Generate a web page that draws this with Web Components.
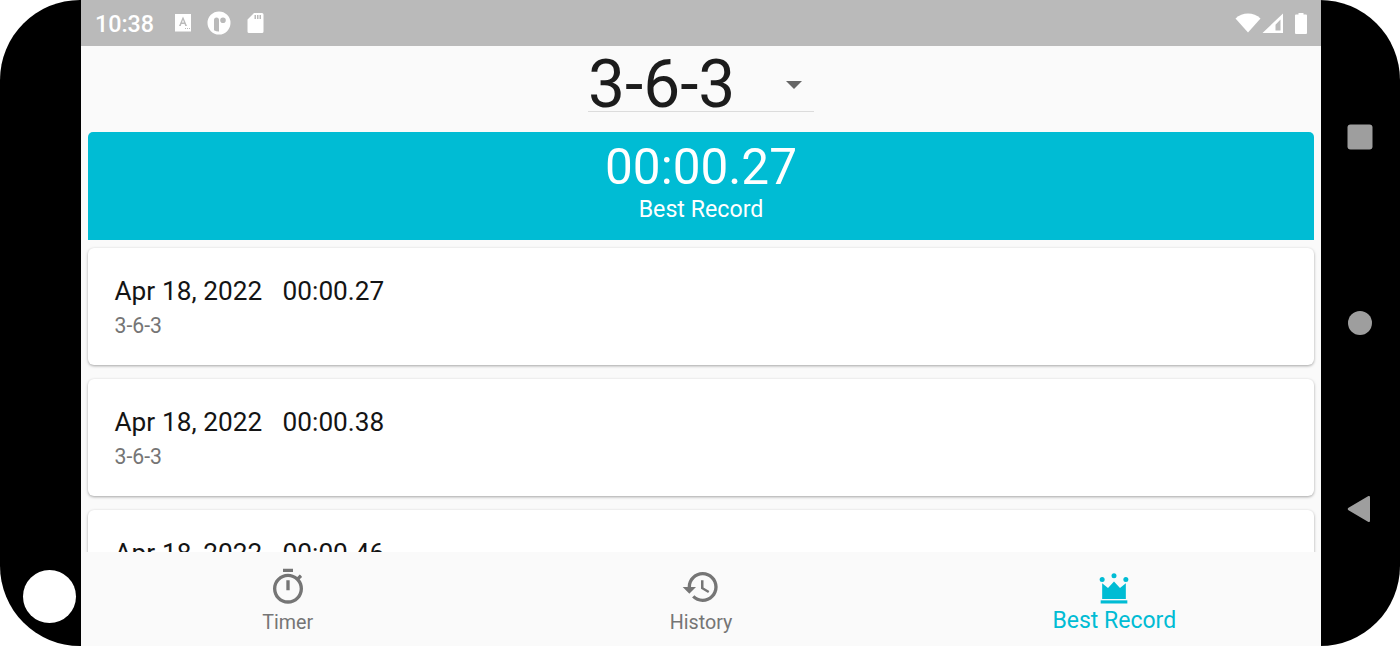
<!DOCTYPE html>
<html>
<head>
<meta charset="utf-8">
<style>
  html, body { margin: 0; height: 100%; background: #fff; font-family: Roboto, sans-serif; }
</style>
</head>
<body>
<app-device>
  <status-bar slot="status" time="10:38"></status-bar>
  <record-spinner slot="main" value="3-6-3"></record-spinner>
  <best-banner slot="main" time="00:00.27">Best Record</best-banner>
  <record-card slot="main" date="Apr 18, 2022" time="00:00.27" name="3-6-3"></record-card>
  <record-card slot="main" date="Apr 18, 2022" time="00:00.38" name="3-6-3"></record-card>
  <record-card slot="main" date="Apr 18, 2022" time="00:00.46" name="3-6-3"></record-card>
  <bottom-nav slot="nav">
    <nav-item icon="timer">Timer</nav-item>
    <nav-item icon="history">History</nav-item>
    <nav-item icon="crown" active>Best Record</nav-item>
  </bottom-nav>
</app-device>

<script>
// the phone frame: black body with left bezel, screen, right soft keys
class AppDevice extends HTMLElement {
  constructor() {
    super();
    this.attachShadow({ mode: "open" });
    this.shadowRoot.innerHTML = `
    <style>
      :host { display: flex; width: 1400px; height: 646px; background: #000; border-radius: 80px; overflow: hidden; }
      .left { width: 81px; flex: none; display: flex; flex-direction: column; justify-content: flex-end; align-items: center; padding: 0 0 23px 18px; box-sizing: border-box; }
      .cam { width: 53px; height: 53px; border-radius: 50%; background: #fff; }
      .screen { width: 1240px; flex: none; display: flex; flex-direction: column; background: #fafafa; }
      .main { flex: 1; min-height: 0; overflow: hidden; display: flex; flex-direction: column; }
      .right { flex: 1; display: flex; flex-direction: column; align-items: center; padding: 124px 1px 0 0; box-sizing: border-box; }
      .key { display: block; fill: #9e9e9e; }
      .k2 { margin-top: 161px; }
      .k3 { margin-top: 160px; }
    </style>
    <div class="left"><div class="cam"></div></div>
    <div class="screen">
      <slot name="status"></slot>
      <div class="main"><slot name="main"></slot></div>
      <slot name="nav"></slot>
    </div>
    <div class="right">
      <svg class="key" width="26" height="26" viewBox="0 0 26 26"><rect x="0.5" y="0.5" width="25" height="25" rx="3"/></svg>
      <svg class="key k2" width="26" height="24" viewBox="0 0 26 24"><circle cx="13" cy="12" r="12"/></svg>
      <svg class="key k3" width="26" height="28" viewBox="0 0 26 28" style="transform:translateX(-1px)"><path d="M22 1.2c1-.7 2-.2 2 1v23.600c0 1.200-1 1.700-2 1L2.500 15.200c-1-.6-1-1.800 0-2.400z"/></svg>
    </div>`;
  }
}

class StatusBar extends HTMLElement {
  constructor() {
    super();
    this.attachShadow({ mode: "open" });
    this.shadowRoot.innerHTML = `
    <style>
      :host { display: flex; align-items: center; height: 46px; background: #bababa; color: #fff; padding: 0 13px 0 14px; box-sizing: border-box; }
      .time { font: 500 23.300px/42px Roboto, sans-serif; width: 79px; padding-top: 2px; }
      svg { display: block; fill: #fff; flex: none; }
      .sp { flex: 1; }
    </style>
    <span class="time">${this.getAttribute("time")}</span>
    <svg width="18" height="20" viewBox="0 0 18 20"><path fill-rule="evenodd" d="M1 1h16v17.500H1zM9 3.500L5 13h1.700l.7-1.900h3.200l.7 1.900H13L9 3.500zm0 3.300l1 2.800H8zM11 15h1v1h-1zm2 0h1v1h-1zm2 0h1v1h-1z"/></svg>
    <svg width="24" height="24" viewBox="0 0 24 24" style="margin-left:15px"><path fill-rule="evenodd" d="M12 .5a11.500 11.500 0 1 1 0 23 11.500 11.500 0 0 1 0-23zM9.500 6.500a2.500 2.500 0 0 0-2.500 2.500v10.200a9 9 0 0 0 5 1.300V9a2.500 2.500 0 0 0-2.500-2.500zM16 6.500a2.800 2.800 0 1 0 0 5.600 2.800 2.800 0 0 0 0-5.600z"/></svg>
    <svg width="18" height="20" viewBox="0 0 18 20" style="margin-left:15px"><path fill-rule="evenodd" d="M8 0h8a1.500 1.500 0 0 1 1.500 1.500v17A1.500 1.500 0 0 1 16 20H3a1.500 1.500 0 0 1-1.500-1.500V6.500zM8.500 2v4H10V2zm2.500 0v4h1.500V2zm2.500 0v4H15V2z"/></svg>
    <span class="sp"></span>
    <svg width="26" height="20" viewBox="0 0 26 20" style="transform:translateX(1px)"><path d="M13 19.500L.5 5.500C4 2.300 8.300.5 13 .5s9 1.800 12.500 5z"/></svg>
    <svg width="22" height="20" viewBox="0 0 22 20" style="margin-left:2px"><path fill-rule="evenodd" d="M21 .5V20H.5zM18.500 6.500l-5 5.200V17.500h5z"/></svg>
    <svg width="14" height="21" viewBox="0 0 14 21" style="margin-left:10px"><path d="M4.500 0h5v1.500h2.500a1 1 0 0 1 1 1V20a1 1 0 0 1-1 1H2a1 1 0 0 1-1-1V2.500a1 1 0 0 1 1-1h2.500z"/></svg>`;
  }
}

class RecordSpinner extends HTMLElement {
  constructor() {
    super();
    this.attachShadow({ mode: "open" });
    this.shadowRoot.innerHTML = `
    <style>
      :host { display: flex; justify-content: center; height: 66px; flex: none; }
      .box { width: 226px; height: 66px; box-sizing: border-box; border-bottom: 1px solid #dcdcdc; display: flex; align-items: center; padding: 13px 0 0 0; }
      .val { font: 400 65.800px/52px Roboto, sans-serif; color: #1c1c1c; flex: 1; }
      svg { display: block; fill: #666; margin: 0 12px 0 0; }
    </style>
    <div class="box">
      <span class="val">${this.getAttribute("value")}</span>
      <svg width="16" height="8" viewBox="0 0 16 8"><path d="M0 0h16L8 8z"/></svg>
    </div>`;
  }
}

class BestBanner extends HTMLElement {
  constructor() {
    super();
    this.attachShadow({ mode: "open" });
    this.shadowRoot.innerHTML = `
    <style>
      :host { display: flex; flex: none; flex-direction: column; align-items: center; height: 108px; margin: 20px 7px 0; background: #00bcd4; color: #fff; border-radius: 5px 5px 0 0; box-sizing: border-box; padding-top: 7px; }
      .t { font: 400 49.500px/56px Roboto, sans-serif; }
      .l { font: 400 23.200px/28px Roboto, sans-serif; }
    </style>
    <div class="t">${this.getAttribute("time")}</div>
    <div class="l"><slot></slot></div>`;
  }
}

class RecordCard extends HTMLElement {
  constructor() {
    super();
    this.attachShadow({ mode: "open" });
    this.shadowRoot.innerHTML = `
    <style>
      :host { display: block; flex: none; height: 117px; margin: 8px 7px 6px; background: #fff; border-radius: 6px; box-shadow: 0 1px 3px rgba(0,0,0,.35); box-sizing: border-box; padding: 27px 26.500px 0; }
      .top { font: 400 26.200px/32px Roboto, sans-serif; color: #141414; white-space: pre; word-spacing: .3px; }
      .sub { font: 400 21.200px/26px Roboto, sans-serif; color: #757575; margin-top: 6px; }
    </style>
    <div class="top">${this.getAttribute("date")}   ${this.getAttribute("time")}</div>
    <div class="sub">${this.getAttribute("name")}</div>`;
  }
}

class BottomNav extends HTMLElement {
  constructor() {
    super();
    this.attachShadow({ mode: "open" });
    this.shadowRoot.innerHTML = `
    <style>
      :host { display: flex; flex: none; height: 94px; background: #fafafa; position: relative; }
      ::slotted(nav-item) { flex: 1; }
    </style>
    <slot></slot>`;
  }
}

const NAV_ICONS = {
  timer: '<path d="M15 1H9v2h6V1zm-4 13h2V8h-2v6zm8.030-6.610l1.420-1.420c-.43-.51-.9-.99-1.410-1.410l-1.420 1.420C16.070 4.740 14.120 4 12 4c-4.970 0-9 4.030-9 9s4.020 9 9 9 9-4.030 9-9c0-2.120-.74-4.070-1.970-5.610zM12 20c-3.870 0-7-3.130-7-7s3.130-7 7-7 7 3.130 7 7-3.130 7-7 7z"/>',
  history: '<path d="M13 3c-4.970 0-9 4.030-9 9H1l3.890 3.890.07.14L9 12H6c0-3.870 3.130-7 7-7s7 3.130 7 7-3.130 7-7 7c-1.930 0-3.680-.79-4.940-2.060l-1.420 1.420C8.270 19.990 10.510 21 13 21c4.970 0 9-4.030 9-9s-4.030-9-9-9zm-1 5v5l4.280 2.540.72-1.210-3.500-2.080V8H12z"/>',
  crown: '<circle cx="4.900" cy="7.500" r="1.500"/><circle cx="12" cy="5.300" r="1.500"/><circle cx="19.100" cy="7.500" r="1.500"/><path d="M4.900 9.800l3.500 2.800L12 8.700l3.600 3.900 3.500-2.800V19.200H4.900z"/><rect x="4" y="20" width="16" height="1.900"/>'
};

class NavItem extends HTMLElement {
  constructor() {
    super();
    this.attachShadow({ mode: "open" });
    const on = this.hasAttribute("active");
    this.shadowRoot.innerHTML = `
    <style>
      :host { display: flex; flex-direction: column; align-items: center; padding-top: 15px; box-sizing: border-box; color: ${on ? "#00bcd4" : "#757575"}; }
      svg { display: block; fill: currentColor; flex: none; }
      .lb { font: 400 ${on ? "23px" : "19.700px"}/28px Roboto, sans-serif; margin-top: ${on ? "0" : "2px"}; }
    </style>
    <svg width="40" height="40" viewBox="0 0 24 24">${NAV_ICONS[this.getAttribute("icon")]}</svg>
    <div class="lb"><slot></slot></div>`;
  }
}

customElements.define("app-device", AppDevice);
customElements.define("status-bar", StatusBar);
customElements.define("record-spinner", RecordSpinner);
customElements.define("best-banner", BestBanner);
customElements.define("record-card", RecordCard);
customElements.define("bottom-nav", BottomNav);
customElements.define("nav-item", NavItem);
</script>
</body>
</html>
